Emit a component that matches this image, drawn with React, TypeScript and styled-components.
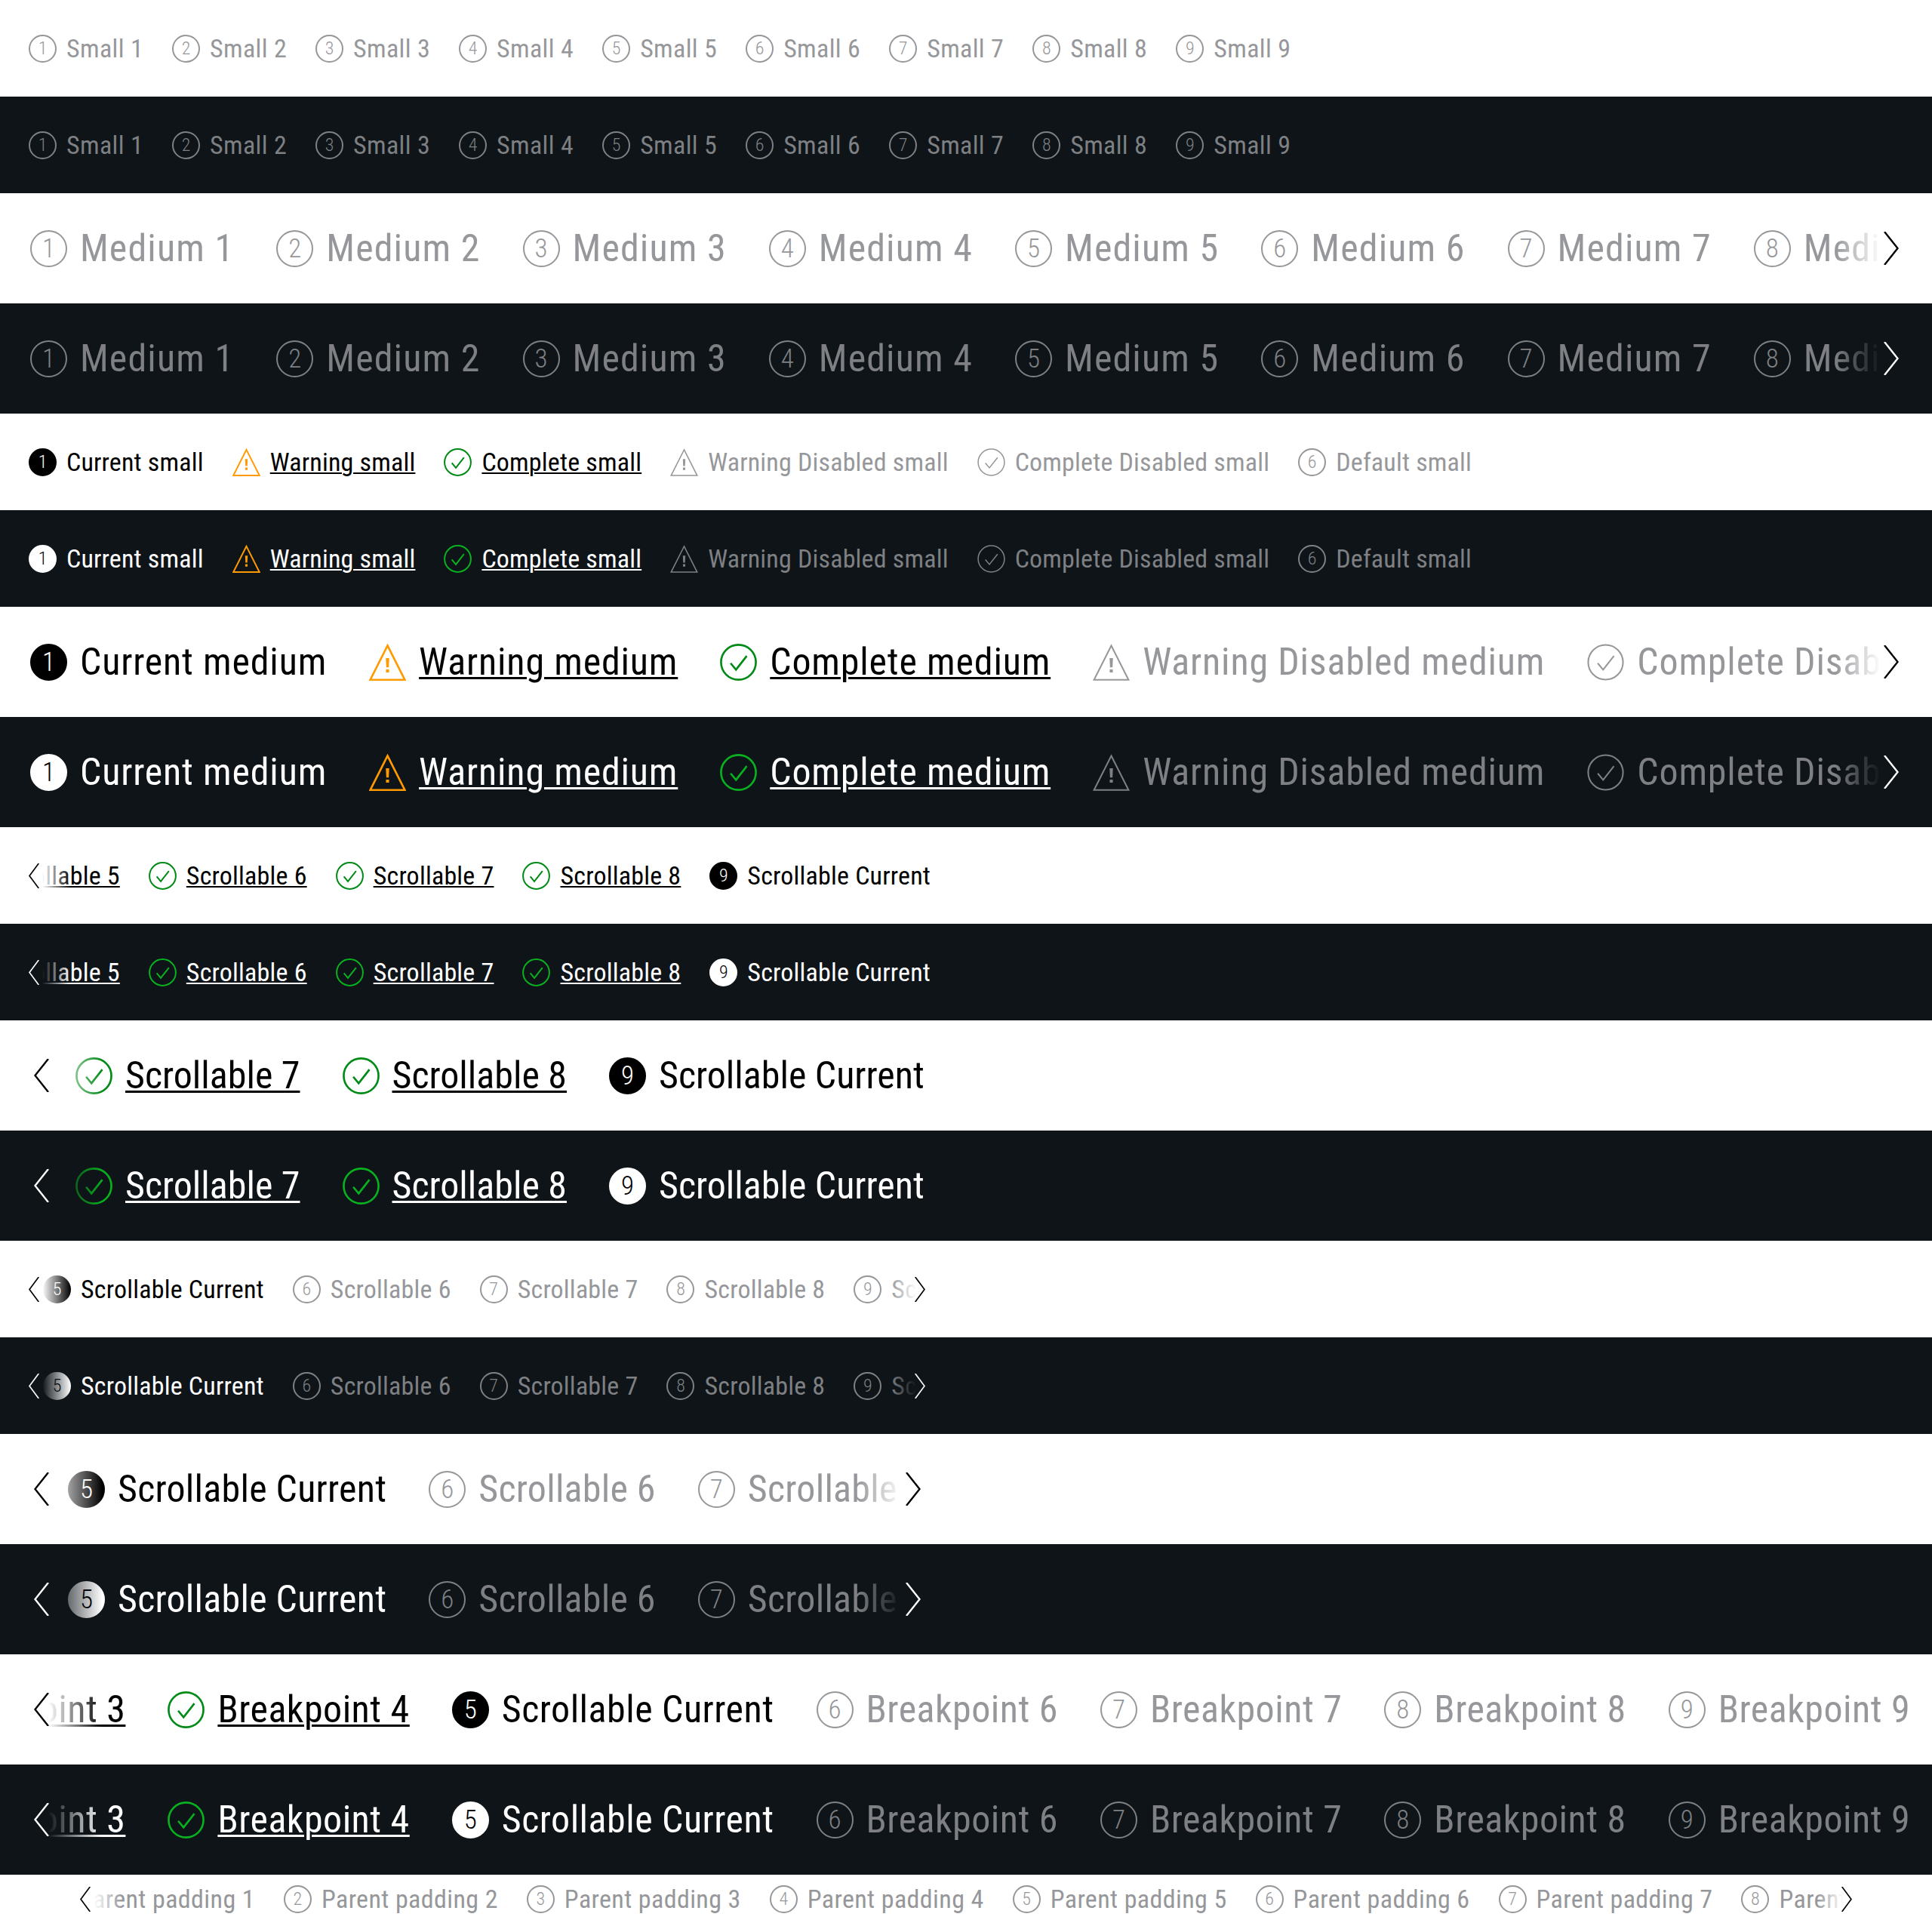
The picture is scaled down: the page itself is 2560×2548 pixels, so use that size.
import React from 'react';
import styled, { createGlobalStyle, css } from 'styled-components';

type Size = 'small' | 'medium';
type StepState = 'default' | 'current' | 'warning' | 'complete' | 'warningDisabled' | 'completeDisabled';

interface StepData {
  label: string;
  num: number;
  state?: StepState;
}

interface StepperProps {
  size: Size;
  dark: boolean;
  steps: StepData[];
  tracking: number;
  offset?: number;
  width?: number;
  prev?: boolean;
  next?: boolean;
  compact?: boolean;
}

const GlobalStyle = createGlobalStyle`
  html, body {
    margin: 0;
    padding: 0;
    background: #fff;
  }
`;

const DARK = '#0e1418';
const GREY_LIGHT = '#96979a';
const GREY_DARK = '#7e8083';

const Section = styled.section<{ $dark: boolean; $compact?: boolean }>`
  background: ${({ $dark }) => ($dark ? DARK : '#fff')};
  padding: ${({ $compact }) => ($compact ? '8px 96px' : '40px 28px')};
`;

const Scroller = styled.div<{ $width?: number }>`
  position: relative;
  overflow: hidden;
  max-width: ${({ $width }) => ($width ? `${$width}px` : 'none')};
`;

const Track = styled.div<{ $size: Size; $offset: number }>`
  display: flex;
  width: max-content;
  margin-left: ${({ $offset }) => $offset}px;
  gap: ${({ $size }) => ($size === 'small' ? 38 : 56)}px;
`;

const StepButton = styled.button<{ $size: Size; $dark: boolean; $state: StepState }>`
  display: flex;
  align-items: center;
  gap: ${({ $size }) => ($size === 'small' ? 13 : 17)}px;
  padding: 0;
  border: 0;
  background: none;
  font-family: 'Roboto', 'Liberation Sans', sans-serif;
  font-stretch: 75%;
  font-weight: 400;
  white-space: nowrap;
  font-size: ${({ $size }) => ($size === 'small' ? 34 : 50)}px;
  line-height: ${({ $size }) => ($size === 'small' ? 48 : 66)}px;
  color: ${({ $dark, $state }) =>
    $state === 'current' || $state === 'warning' || $state === 'complete'
      ? $dark
        ? '#fff'
        : '#000'
      : $dark
        ? GREY_DARK
        : GREY_LIGHT};
`;

const Label = styled.span<{ $size: Size; $underline: boolean; $tracking: number }>`
  letter-spacing: ${({ $tracking }) => $tracking}px;
  ${({ $underline, $size }) =>
    $underline &&
    css`
      text-decoration: underline;
      text-decoration-thickness: ${$size === 'small' ? 2 : 3}px;
      text-underline-offset: ${$size === 'small' ? 2 : 3}px;
    `}
`;

const NumberBadge = styled.span<{ $size: Size; $filled: boolean; $dark: boolean }>`
  flex: none;
  box-sizing: border-box;
  display: flex;
  align-items: center;
  justify-content: center;
  width: ${({ $size }) => ($size === 'small' ? 37 : 49)}px;
  height: ${({ $size }) => ($size === 'small' ? 37 : 49)}px;
  border-radius: 50%;
  border: 2px solid currentColor;
  font-size: ${({ $size }) => ($size === 'small' ? 24 : 35)}px;
  font-weight: 300;
  line-height: 1;
  ${({ $filled, $dark }) =>
    $filled &&
    css`
      background: ${$dark ? '#fff' : '#000'};
      border-color: ${$dark ? '#fff' : '#000'};
      color: ${$dark ? '#000' : '#fff'};
    `}
`;

const StateIcon = styled.svg<{ $size: Size; $color?: string }>`
  flex: none;
  display: block;
  width: ${({ $size }) => ($size === 'small' ? 37 : 49)}px;
  height: ${({ $size }) => ($size === 'small' ? 37 : 49)}px;
  color: ${({ $color }) => $color ?? 'inherit'};
`;

const Fade = styled.div<{ $side: 'left' | 'right'; $size: Size; $dark: boolean }>`
  position: absolute;
  top: 0;
  bottom: 0;
  ${({ $side }) => $side}: 0;
  display: flex;
  align-items: center;
  justify-content: ${({ $side }) => ($side === 'left' ? 'flex-start' : 'flex-end')};
  color: ${({ $dark }) => ($dark ? '#fff' : '#000')};
  padding: ${({ $side, $size }) => {
    const pad = $size === 'small' ? 10 : $side === 'left' ? 17 : 16;
    return $side === 'left' ? `0 0 0 ${pad}px` : `0 ${pad}px 0 0`;
  }};
  ${({ $side, $size, $dark }) => {
    const bg = $dark ? '14, 20, 24' : '255, 255, 255';
    const solid = $size === 'small' ? ($side === 'left' ? 28 : 22) : $side === 'left' ? 36 : 40;
    const clear = $size === 'small' ? ($side === 'left' ? 66 : 56) : $side === 'left' ? 108 : 100;
    return css`
      width: ${clear}px;
      box-sizing: border-box;
      background: linear-gradient(
        to ${$side === 'left' ? 'right' : 'left'},
        rgb(${bg}) ${solid}px,
        rgba(${bg}, 0) ${clear}px
      );
    `;
  }}
`;

const Chevron = styled.svg<{ $size: Size }>`
  flex: none;
  display: block;
  width: ${({ $size }) => ($size === 'small' ? 14 : 20)}px;
  height: ${({ $size }) => ($size === 'small' ? 33 : 44)}px;
`;

const WarningGlyph: React.FC<{ active: boolean }> = ({ active }) => (
  <>
    <path
      d="M12 1.2 23.2 23.4H.8Z"
      fill="none"
      stroke="currentColor"
      strokeWidth={active ? 1.3 : 1}
    />
    <path d="M10.9 9.3h2.2l-.3 6h-1.6ZM11 16.6h2v2h-2Z" fill="currentColor" />
  </>
);

const CheckGlyph: React.FC<{ active: boolean }> = ({ active }) => (
  <>
    <circle cx="12" cy="12" r="11.3" fill="none" stroke="currentColor" strokeWidth={active ? 1.3 : 1} />
    <path d="M6.9 12.6 10.4 16.8 17.4 7.9" fill="none" stroke="currentColor" strokeWidth={active ? 1.3 : 1} />
  </>
);

const StepIcon: React.FC<{ step: StepData; size: Size; dark: boolean }> = ({ step, size, dark }) => {
  const state = step.state ?? 'default';
  if (state === 'warning' || state === 'warningDisabled') {
    const active = state === 'warning';
    return (
      <StateIcon $size={size} $color={active ? '#ff9b00' : undefined} viewBox="0 0 24 24">
        <WarningGlyph active={active} />
      </StateIcon>
    );
  }
  if (state === 'complete' || state === 'completeDisabled') {
    const active = state === 'complete';
    const green = dark ? '#09b01f' : '#018a16';
    return (
      <StateIcon $size={size} $color={active ? green : undefined} viewBox="0 0 24 24">
        <CheckGlyph active={active} />
      </StateIcon>
    );
  }
  return (
    <NumberBadge $size={size} $dark={dark} $filled={state === 'current'}>
      {step.num}
    </NumberBadge>
  );
};

const Stepper: React.FC<StepperProps> = ({ size, dark, steps, tracking, offset, width, prev, next, compact }) => (
  <Section $dark={dark} $compact={compact}>
    <Scroller $width={width}>
      <Track $size={size} $offset={offset ?? (size === 'small' ? 10 : 12)}>
        {steps.map((step) => {
          const state = step.state ?? 'default';
          return (
            <StepButton key={step.label} $size={size} $dark={dark} $state={state}>
              <StepIcon step={step} size={size} dark={dark} />
              <Label $size={size} $tracking={tracking} $underline={state === 'warning' || state === 'complete'}>
                {step.label}
              </Label>
            </StepButton>
          );
        })}
      </Track>
      {prev && (
        <Fade $side="left" $size={size} $dark={dark}>
          <Chevron $size={size} viewBox="0 0 20 44" preserveAspectRatio="none">
            <path d="M19 0 1.5 22 19 44" fill="none" stroke="currentColor" strokeWidth="2.4" />
          </Chevron>
        </Fade>
      )}
      {next && (
        <Fade $side="right" $size={size} $dark={dark}>
          <Chevron $size={size} viewBox="0 0 20 44" preserveAspectRatio="none">
            <path d="M1 0 18.5 22 1 44" fill="none" stroke="currentColor" strokeWidth="2.4" />
          </Chevron>
        </Fade>
      )}
    </Scroller>
  </Section>
);

const numbered = (prefix: string, from: number, to: number, state?: StepState): StepData[] =>
  Array.from({ length: to - from + 1 }, (_, i) => ({ label: `${prefix} ${from + i}`, num: from + i, state }));

const statesFor = (size: Size): StepData[] => [
  { label: `Current ${size}`, num: 1, state: 'current' },
  { label: `Warning ${size}`, num: 2, state: 'warning' },
  { label: `Complete ${size}`, num: 3, state: 'complete' },
  { label: `Warning Disabled ${size}`, num: 4, state: 'warningDisabled' },
  { label: `Complete Disabled ${size}`, num: 5, state: 'completeDisabled' },
  { label: `Default ${size}`, num: 6 },
];

const scrolledEnd = (from: number): StepData[] => [
  ...numbered('Scrollable', from, 8, 'complete'),
  { label: 'Scrollable Current', num: 9, state: 'current' },
];

const scrolledMiddle = (to: number): StepData[] => [
  { label: 'Scrollable Current', num: 5, state: 'current' },
  ...numbered('Scrollable', 6, to),
];

const breakpointSteps: StepData[] = [
  ...numbered('Breakpoint', 3, 4, 'complete'),
  { label: 'Scrollable Current', num: 5, state: 'current' },
  ...numbered('Breakpoint', 6, 9),
];

const SCROLL_WIDTH = 1208;

const rows: Omit<StepperProps, 'dark'>[] = [
  { size: 'small', tracking: 0.33, steps: numbered('Small', 1, 9) },
  { size: 'medium', tracking: 1.1, steps: numbered('Medium', 1, 8), next: true },
  { size: 'small', tracking: 0.18, steps: statesFor('small') },
  { size: 'medium', tracking: 0.82, steps: statesFor('medium'), next: true },
  { size: 'small', tracking: 0.2, steps: scrolledEnd(5), offset: -79, width: SCROLL_WIDTH, prev: true },
  { size: 'medium', tracking: 0, steps: scrolledEnd(7), offset: 72, width: SCROLL_WIDTH, prev: true },
  { size: 'small', tracking: 0.2, steps: scrolledMiddle(9), offset: 29, width: SCROLL_WIDTH, prev: true, next: true },
  { size: 'medium', tracking: 0.25, steps: scrolledMiddle(8), offset: 62, width: SCROLL_WIDTH, prev: true, next: true },
  { size: 'medium', tracking: 0.5, steps: breakpointSteps, offset: -182, prev: true },
];

const App: React.FC = () => (
  <>
    <GlobalStyle />
    {rows.map((row, i) => (
      <React.Fragment key={i}>
        <Stepper {...row} dark={false} />
        <Stepper {...row} dark />
      </React.Fragment>
    ))}
    <Stepper
      size="small"
      dark={false}
      tracking={0.39}
      steps={numbered('Parent padding', 1, 9)}
      offset={-42}
      prev
      next
      compact
    />
  </>
);

export default App;
